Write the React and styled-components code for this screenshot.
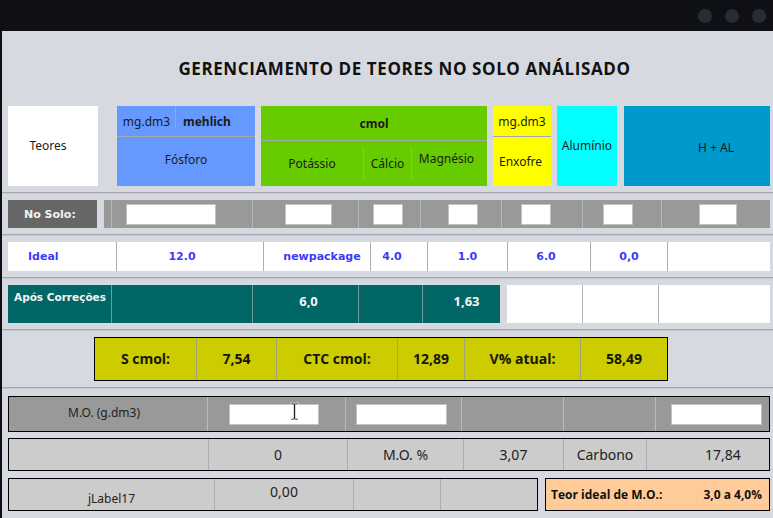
import React from 'react';
import styled, { createGlobalStyle } from 'styled-components';

const GlobalStyle = createGlobalStyle`
  html, body {
    margin: 0;
    padding: 0;
    background: #0f1015;
  }
  body {
    font-family: "Noto Sans", "DejaVu Sans", sans-serif;
  }
  * {
    box-sizing: border-box;
  }
`;

const Window = styled.div`
  width: 773px;
  height: 518px;
  display: flex;
  flex-direction: column;
  overflow: hidden;
  background: #0f1015;
`;

const TitleBar = styled.div`
  height: 31px;
  flex-shrink: 0;
  display: flex;
  justify-content: flex-end;
  align-items: center;
  gap: 13px;
  padding-right: 7px;
`;

const Dot = styled.span`
  width: 14px;
  height: 14px;
  border-radius: 50%;
  background: #2a2c33;
`;

const Body = styled.div`
  flex: 1;
  margin-left: 2px;
  background: #d6d9e0;
  display: flex;
  flex-direction: column;
`;

const Heading = styled.h1`
  margin: 0;
  height: 75px;
  flex-shrink: 0;
  display: flex;
  align-items: center;
  justify-content: center;
  padding-left: 34px;
  font: 700 17px "Open Sans", sans-serif;
  letter-spacing: 0.6px;
  color: #111;
`;

const Band = styled.div`
  display: flex;
  gap: ${({ $gap }) => $gap ?? 6}px;
  padding: 0 3px 0 6px;
  margin-top: ${({ $top }) => $top ?? 0}px;
`;

const Rule = styled.div`
  height: 2px;
  flex-shrink: 0;
  margin: 6px 0 ${({ $after }) => $after ?? 6}px;
  border-top: 1px solid #a5a8b0;
  border-bottom: 1px solid #c6c9d0;
`;

/* ---------- header blocks ---------- */

const Block = styled.div`
  width: ${({ $w }) => $w}px;
  height: 80px;
  flex-shrink: 0;
  background: ${({ $bg }) => $bg};
  display: flex;
  flex-direction: column;
  color: #1b1b1b;
  font-size: 12px;
  margin-right: ${({ $mr }) => $mr ?? 0}px;
`;

const BlockTop = styled.div`
  height: ${({ $h }) => $h}px;
  flex-shrink: 0;
  border-bottom: 1px solid #a2a8b3;
  display: flex;
  align-items: center;
  justify-content: center;
  font-weight: ${({ $bold }) => ($bold ? 700 : 400)};
`;

const UnitCell = styled.div`
  position: relative;
  width: 59px;
  height: 100%;
  display: flex;
  align-items: center;
  justify-content: center;

  &::after {
    content: '';
    position: absolute;
    right: 0;
    top: 0;
    width: 1px;
    height: 23px;
    background: #a2a8b3;
  }
`;

const MethodCell = styled.div`
  flex: 1;
  display: flex;
  align-items: center;
  padding-left: 7px;
  font-weight: 700;
`;

const BlockBody = styled.div`
  flex: 1;
  display: flex;
  align-items: center;
  justify-content: ${({ $left }) => ($left ? 'flex-start' : 'center')};
  padding: ${({ $pad }) => $pad ?? '0'};
`;

const SubGrid = styled.div`
  flex: 1;
  display: grid;
  grid-template-columns: 102px 48px 1fr;
  padding: 6px 0;
`;

const SubCell = styled.div`
  display: flex;
  align-items: center;
  justify-content: center;
  padding: 0 ${({ $right }) => $right ?? 0}px ${({ $lift }) => $lift ?? 0}px 0;

  & + & {
    border-left: 1px solid #a2a8b3;
  }
`;

/* ---------- grid strips ---------- */

const Strip = styled.div`
  display: grid;
  grid-template-columns: ${({ $cols }) => $cols.map((c) => `${c}px`).join(' ')};
  height: ${({ $h }) => $h}px;
  flex-shrink: 0;
  background: ${({ $bg }) => $bg};
  border: ${({ $frame }) => ($frame ? '1px solid #000' : 'none')};

  & > * + * {
    border-left: 1px solid ${({ $sep }) => $sep};
  }
`;

const Cell = styled.div`
  position: relative;
  display: flex;
  align-items: ${({ $top }) => ($top ? 'flex-start' : 'center')};
  justify-content: ${({ $start }) => ($start ? 'flex-start' : 'center')};
  padding: ${({ $pad }) => $pad ?? '0'};
  white-space: nowrap;
  min-width: 0;
`;

const SoloLabel = styled.div`
  width: 89px;
  height: 28px;
  flex-shrink: 0;
  background: #666666;
  color: #f2f2f2;
  font: 700 11px "DejaVu Sans", sans-serif;
  display: flex;
  align-items: center;
  padding-left: 16px;
`;

const SoloBar = styled(Strip)`
  flex: 1;
`;

const Field = styled.input`
  width: ${({ $w }) => $w}px;
  height: 21px;
  padding: 0;
  background: #fff;
  border: 1px solid #c2c2c2;
  outline: none;
  flex-shrink: 0;
`;

const IdealStrip = styled(Strip)`
  width: 762px;
  color: #3a3aff;
  font: 700 11px "DejaVu Sans", sans-serif;
`;

const TealStrip = styled(Strip)`
  color: #f4f4f4;
  font: 700 13px "Noto Sans", sans-serif;
`;

const BlankStrip = styled(Strip)``;

const StatsBox = styled(Strip)`
  margin-left: 86px;
  color: #16160a;
  font: 700 14px "Open Sans", sans-serif;
`;

const MoStrip = styled(Strip)`
  color: #222;
  font: 400 12px "Noto Sans", sans-serif;
`;

const ResultStrip = styled(Strip)`
  color: #222;
  font: 400 14px "Noto Sans", sans-serif;
`;

const LabelText = styled.span`
  font-size: 12px;
`;

const IdealBox = styled.div`
  width: 225px;
  height: 33px;
  flex-shrink: 0;
  background: #ffcc99;
  border: 1px solid #000;
  display: flex;
  align-items: center;
  justify-content: space-between;
  padding: 0 7px 0 5px;
  color: #111;
  font: 700 12px "Open Sans", sans-serif;
`;

const Caret = styled.svg`
  position: absolute;
  left: 82px;
  top: 5px;
  pointer-events: none;
`;

const soloCells = [
  { c: 7 },
  { c: 141, off: 15, w: 90 },
  { c: 106, off: 33, w: 47 },
  { c: 62, off: 15, w: 30 },
  { c: 81, off: 28, w: 30 },
  { c: 81, off: 20, w: 30 },
  { c: 79, off: 21, w: 30 },
  { c: 109, off: 38, w: 38 },
];

const idealCells = [
  { c: 108, t: 'Ideal', start: true, pad: '0 0 0 20px' },
  { c: 147, t: '12.0', pad: '0 16px 0 0' },
  { c: 107, t: 'newpackage', pad: '0 0 0 10px' },
  { c: 57, t: '4.0', pad: '0 14px 0 0' },
  { c: 80, t: '1.0' },
  { c: 83, t: '6.0', pad: '0 6px 0 0' },
  { c: 77, t: '0,0' },
  { c: 103, t: '' },
];

const tealCells = [
  { c: 103, t: 'Após Correções', start: true, pad: '6px 0 0 6px', small: true },
  { c: 141, t: '' },
  { c: 106, t: '6,0', pad: '7px 0 0 6px' },
  { c: 64, t: '' },
  { c: 78, t: '1,63', pad: '7px 0 0 10px' },
];

const stats = [
  { c: 101, t: 'S cmol:' },
  { c: 80, t: '7,54' },
  { c: 121, t: 'CTC cmol:' },
  { c: 67, t: '12,89' },
  { c: 116, t: 'V% atual:' },
  { c: 87, t: '58,49' },
];

const resultCells = [
  { c: 199, t: '' },
  { c: 139, t: '0' },
  { c: 116, t: 'M.O. %' },
  { c: 100, t: '3,07' },
  { c: 83, t: 'Carbono' },
  { c: 123, t: '17,84', pad: '0 0 0 30px' },
];

const SmallText = styled.span`
  font: 700 10.5px "DejaVu Sans", sans-serif;
`;

const App = () => {
  return (
    <Window>
      <GlobalStyle />
      <TitleBar>
        <Dot />
        <Dot />
        <Dot />
      </TitleBar>
      <Body>
        <Heading>GERENCIAMENTO DE TEORES NO SOLO ANÁLISADO</Heading>

        <Band>
          <Block $w={90} $bg="#ffffff" $mr={13}>
            <BlockBody $pad="0 10px 2px 0">Teores</BlockBody>
          </Block>
          <Block $w={138} $bg="#6699ff">
            <BlockTop $h={31}>
              <UnitCell>mg.dm3</UnitCell>
              <MethodCell>mehlich</MethodCell>
            </BlockTop>
            <BlockBody $pad="0 0 4px 0">Fósforo</BlockBody>
          </Block>
          <Block $w={226} $bg="#66cc00">
            <BlockTop $h={35} $bold>cmol</BlockTop>
            <SubGrid>
              <SubCell>Potássio</SubCell>
              <SubCell>Cálcio</SubCell>
              <SubCell $lift={10} $right={6}>Magnésio</SubCell>
            </SubGrid>
          </Block>
          <Block $w={58} $bg="#ffff00">
            <BlockTop $h={31}>mg.dm3</BlockTop>
            <BlockBody $left $pad="0 0 0 6px">Enxofre</BlockBody>
          </Block>
          <Block $w={60} $bg="#00ffff" $mr={1}>
            <BlockBody $pad="0 0 2px 0">Alumínio</BlockBody>
          </Block>
          <Block $w={146} $bg="#0099cc">
            <BlockBody $pad="2px 0 0 38px">H + AL</BlockBody>
          </Block>
        </Band>

        <Rule />

        <Band $gap={7}>
          <SoloLabel>No Solo:</SoloLabel>
          <SoloBar $cols={soloCells.map((s) => s.c)} $h={28} $bg="#999999" $sep="#b3b6be">
            {soloCells.map((s, i) => (
              <Cell key={i} $start $pad={`0 0 0 ${s.off ? s.off - 1 : 0}px`}>
                {s.w ? <Field readOnly $w={s.w} /> : null}
              </Cell>
            ))}
          </SoloBar>
        </Band>

        <Rule />

        <Band>
          <IdealStrip $cols={idealCells.map((s) => s.c)} $h={29} $bg="#ffffff" $sep="#a9acb5">
            {idealCells.map((s, i) => (
              <Cell key={i} $start={s.start} $pad={s.pad}>
                {s.t}
              </Cell>
            ))}
          </IdealStrip>
        </Band>

        <Rule />

        <Band $gap={7}>
          <TealStrip $cols={tealCells.map((s) => s.c)} $h={38} $bg="#006666" $sep="#6f9c9c">
            {tealCells.map((s, i) => (
              <Cell key={i} $top $start={s.start} $pad={s.pad}>
                {s.small ? <SmallText>{s.t}</SmallText> : s.t}
              </Cell>
            ))}
          </TealStrip>
          <BlankStrip $cols={[75, 76, 112]} $h={38} $bg="#ffffff" $sep="#aeb1b9">
            <Cell />
            <Cell />
            <Cell />
          </BlankStrip>
        </Band>

        <Rule />

        <Band>
          <StatsBox $frame $cols={stats.map((s) => s.c)} $h={44} $bg="#cccc00" $sep="#a3a37a">
            {stats.map((s, i) => (
              <Cell key={i} $pad="0 0 2px 0">
                {s.t}
              </Cell>
            ))}
          </StatsBox>
        </Band>

        <Rule $after={7} />

        <Band>
          <MoStrip $frame $cols={[198, 138, 116, 102, 92, 114]} $h={36} $bg="#999999" $sep="#b6b9c1">
            <Cell $pad="0 8px 3px 0">M.O. (g.dm3)</Cell>
            <Cell $start $pad="0 0 0 21px">
              <Field readOnly $w={90} />
              <Caret width="9" height="19" viewBox="0 0 9 19">
                <path
                  d="M1 1h2.6l0.9 1 0.9-1H8v1.4H5.4v14.2H8V18H5.4l-0.9-1-0.9 1H1v-1.4h2.6V2.4H1z"
                  fill="#000"
                  stroke="#fff"
                  strokeWidth="0.7"
                />
              </Caret>
            </Cell>
            <Cell $start $pad="0 0 0 10px">
              <Field readOnly $w={91} />
            </Cell>
            <Cell />
            <Cell />
            <Cell $start $pad="0 0 0 15px">
              <Field readOnly $w={91} />
            </Cell>
          </MoStrip>
        </Band>

        <Band $top={6}>
          <ResultStrip $frame $cols={resultCells.map((s) => s.c)} $h={33} $bg="#cccccc" $sep="#a9acb4">
            {resultCells.map((s, i) => (
              <Cell key={i} $pad={s.pad}>
                {s.t}
              </Cell>
            ))}
          </ResultStrip>
        </Band>

        <Band $top={7} $gap={7}>
          <ResultStrip $frame $cols={[205, 139, 87, 97]} $h={33} $bg="#cccccc" $sep="#a9acb4">
            <Cell $pad="8px 0 0 0">
              <LabelText>jLabel17</LabelText>
            </Cell>
            <Cell $pad="0 0 6px 0">0,00</Cell>
            <Cell />
            <Cell />
          </ResultStrip>
          <IdealBox>
            <span>Teor ideal de M.O.:</span>
            <span>3,0 a 4,0%</span>
          </IdealBox>
        </Band>
      </Body>
    </Window>
  );
};

export default App;
